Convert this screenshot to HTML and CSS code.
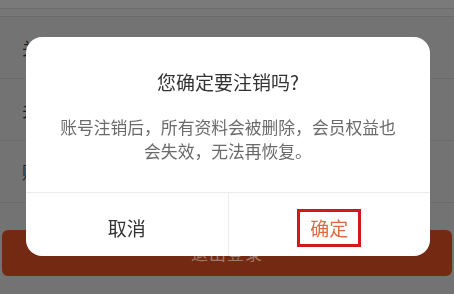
FILE: index.html
```html
<!DOCTYPE html>
<html lang="zh-CN">
<head>
<meta charset="UTF-8">
<meta name="viewport" content="width=device-width, initial-scale=1.0">
<title>注销账号</title>
<link rel="stylesheet" href="styles.css">
</head>
<body>
  <div class="page">
    <div class="topbar"></div>
    <div class="subbar"></div>

    <ul class="menu-list">
      <li class="menu-item">关于我们</li>
      <li class="menu-item">关于隐私</li>
      <li class="menu-item">账号注销</li>
    </ul>

    <div class="logout-btn">退出登录</div>
  </div>

  <!-- confirm dialog -->
  <div class="mask">
    <div class="dialog">
      <div class="dialog-body">
        <h2 class="dialog-title">您确定要注销吗?</h2>
        <p class="dialog-text">账号注销后，所有资料会被删除，会员权益也会失效，无法再恢复。</p>
      </div>
      <div class="dialog-actions">
        <div class="action-btn cancel">取消</div>
        <div class="action-btn confirm"><span class="confirm-label">确定</span></div>
      </div>
    </div>
  </div>
</body>
</html>
```

FILE: styles.css
```css
body {
  margin: 0;
  padding: 0;
  font-family: "Noto Sans CJK SC", "Noto Sans", sans-serif;
  background-color: #737373;
  color: #1a1a1a;
  overflow: hidden;
}

.page {
  height: 294px;
}

.topbar {
  height: 8px;
  background-color: #7a7a7a;
  border-bottom: 1px solid #6e6e6e;
}

.subbar {
  height: 7px;
  background-color: #777777;
  border-bottom: 1px solid #6c6c6c;
}

.menu-list {
  list-style: none;
  margin: 0;
  padding: 0;
}

.menu-item {
  display: flex;
  align-items: center;
  height: 61px;
  padding-left: 22px;
  font-size: 17px;
  color: #1c1c1c;
  border-bottom: 1px solid #6b6b6b;
}

.logout-btn {
  margin: 27px 2px 0;
  height: 46px;
  line-height: 46px;
  border-radius: 6px;
  background-color: #742a12;
  color: #a07a6c;
  text-align: center;
  font-size: 17px;
  letter-spacing: 1px;
}

.mask {
  position: fixed;
  inset: 0;
}

.dialog {
  position: absolute;
  left: 26px;
  top: 37px;
  width: 404px;
  height: 219px;
  background: #ffffff;
  border-radius: 16px;
  overflow: hidden;
  display: flex;
  flex-direction: column;
}

.dialog-body {
  padding: 33px 30px 29px;
  border-bottom: 1px solid #ececec;
  text-align: center;
}

.dialog-title {
  margin: 0;
  font-size: 19px;
  font-weight: 400;
  line-height: 24px;
  color: #333333;
}

.dialog-text {
  margin: 21px 0 0;
  font-size: 16.8px;
  line-height: 24px;
  color: #6a6a6a;
}

.dialog-actions {
  flex: 1;
  display: flex;
}

.action-btn {
  flex: 1;
  display: flex;
  align-items: center;
  justify-content: center;
  padding-top: 6px;
  font-size: 19px;
}

.cancel {
  color: #333333;
  border-right: 1px solid #ececec;
}

.confirm {
  color: #dd6a44;
}

.confirm-label {
  display: inline-block;
  padding: 3px 10px;
  border: 3px solid #d0191d;
  line-height: 26px;
}
```
